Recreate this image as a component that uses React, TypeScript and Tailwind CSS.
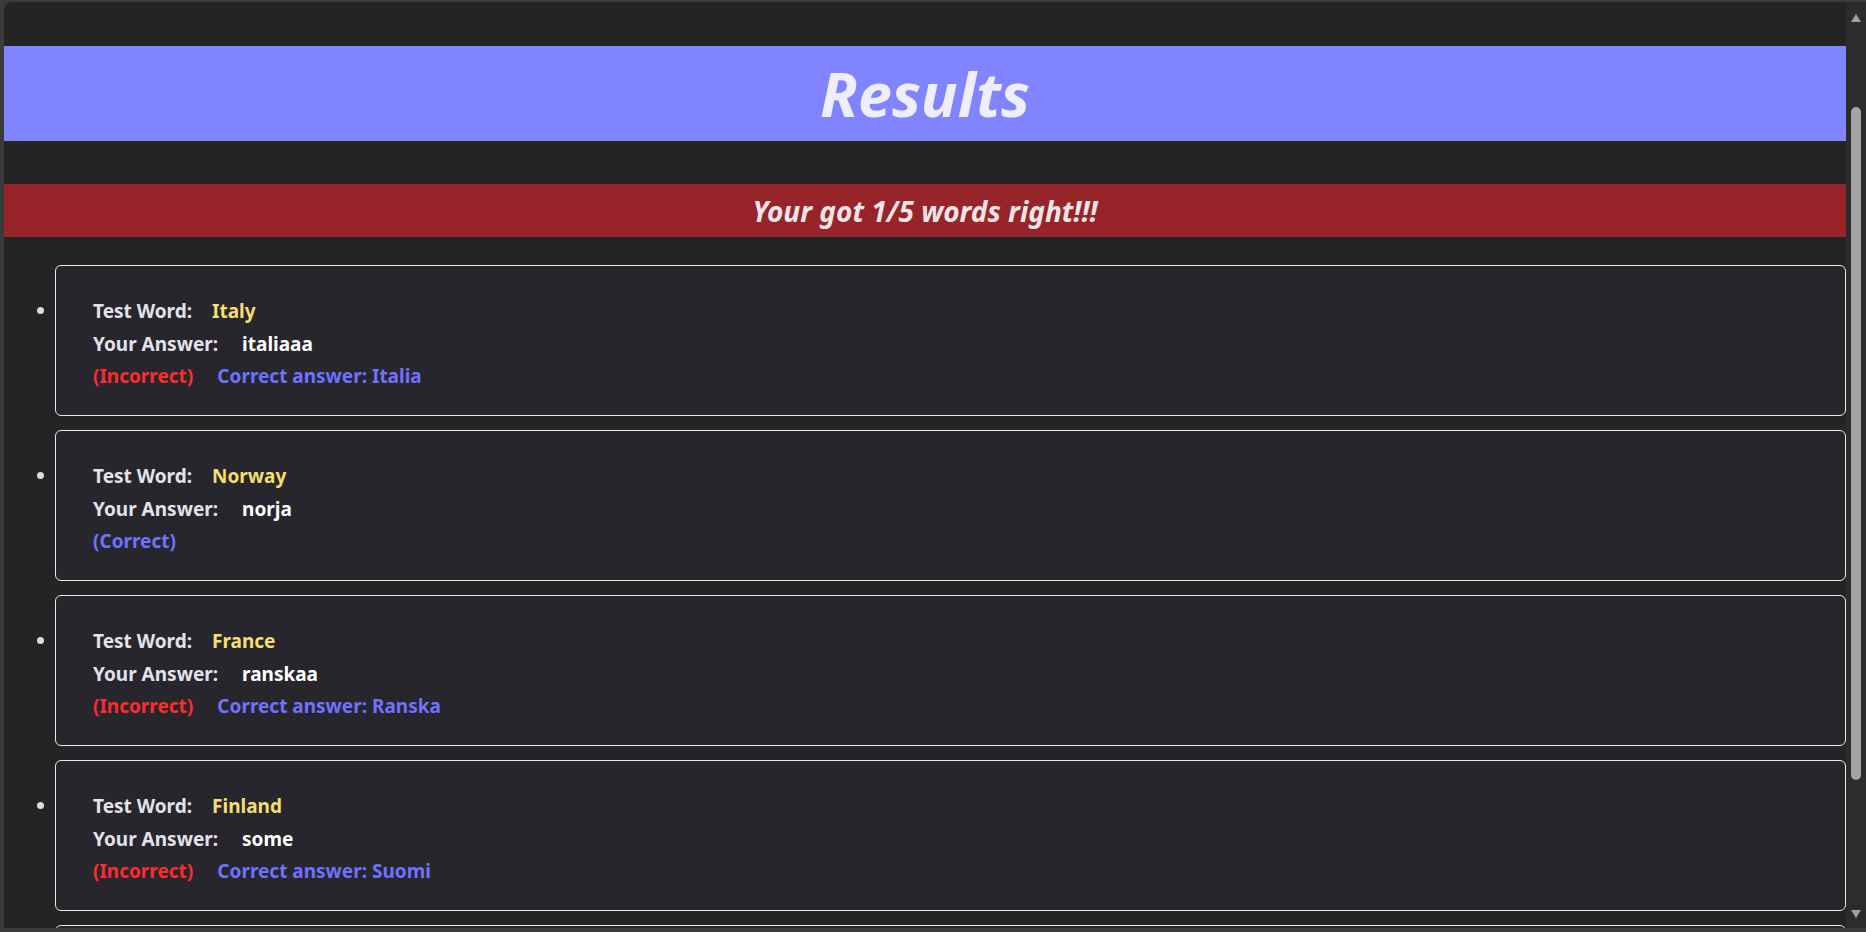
import React from "react";

type Item = { word: string; answer: string; correct: boolean; right?: string };

const items: Item[] = [
  { word: "Italy", answer: "italiaaa", correct: false, right: "Italia" },
  { word: "Norway", answer: "norja", correct: true },
  { word: "France", answer: "ranskaa", correct: false, right: "Ranska" },
  { word: "Finland", answer: "some", correct: false, right: "Suomi" },
  { word: "Sweden", answer: "ruotsi", correct: false, right: "Ruotsi" },
];

function Card({ it }: { it: Item }) {
  return (
    <li className="relative">
      <span className="absolute left-[-18px] top-[42px] h-[7px] w-[7px] rounded-full bg-[#dcdcdc]" />
      <div className="h-[151px] rounded-[6px] border border-[#e8e8e8] bg-[#27262c] pl-[37px] pt-[28px] text-[19px] font-bold">
        <div className="flex h-[34px] items-center">
          <span className="text-[#e2e2ea]">Test Word:</span>
          <span className="ml-[20px] text-[#f7de6e]">{it.word}</span>
        </div>
        <div className="flex h-[32px] items-center">
          <span className="text-[#e2e2ea]">Your Answer:</span>
          <span className="ml-[24px] text-white">{it.answer}</span>
        </div>
        <div className="flex h-[32px] items-center">
          {it.correct ? (
            <span className="text-[#6f71ff]">(Correct)</span>
          ) : (
            <>
              <span className="text-[#ff2b2b]">(Incorrect)</span>
              <span className="ml-[24px] text-[#6f71ff]">Correct answer: {it.right}</span>
            </>
          )}
        </div>
      </div>
    </li>
  );
}

export default function App() {
  return (
    <div
      className="h-[932px] w-full overflow-hidden bg-[#3b3b3b] pb-[4px] pl-[4px] pt-[2px]"
      style={{ fontFamily: '"Noto Sans", "Open Sans", sans-serif' }}
    >
      <div className="flex h-full overflow-hidden rounded-tl-[8px] bg-[#242424]">
        <div className="min-w-0 flex-1 overflow-hidden">
          <div className="h-[44px]" />
          <div className="flex h-[95px] items-center justify-center bg-[#8084ff]">
            <h1 className="text-[61px] font-bold italic leading-none text-[#eeeeff]">Results</h1>
          </div>
          <div className="h-[43px]" />
          <div className="flex h-[53px] items-center justify-center bg-[#962428]">
            <h2 className="text-[28px] font-bold italic leading-none text-[#f3e4ea]">Your got 1/5 words right!!!</h2>
          </div>
          <ul className="flex flex-col gap-[14px] pl-[51px] pt-[28px]">
            {items.map((it) => (
              <Card key={it.word} it={it} />
            ))}
          </ul>
        </div>
        <div className="flex w-[20px] flex-col items-center bg-[#2c2c2c]">
          <svg width="10" height="8" viewBox="0 0 10 8" className="mt-[12px]">
            <polygon points="5,0 10,8 0,8" fill="#a0a0a0" />
          </svg>
          <div className="mt-[85px] h-[673px] w-[10px] rounded-full bg-[#a3a3a3]" />
          <div className="flex-1" />
          <svg width="10" height="8" viewBox="0 0 10 8" className="mb-[10px]">
            <polygon points="0,0 10,0 5,8" fill="#a0a0a0" />
          </svg>
        </div>
      </div>
    </div>
  );
}
